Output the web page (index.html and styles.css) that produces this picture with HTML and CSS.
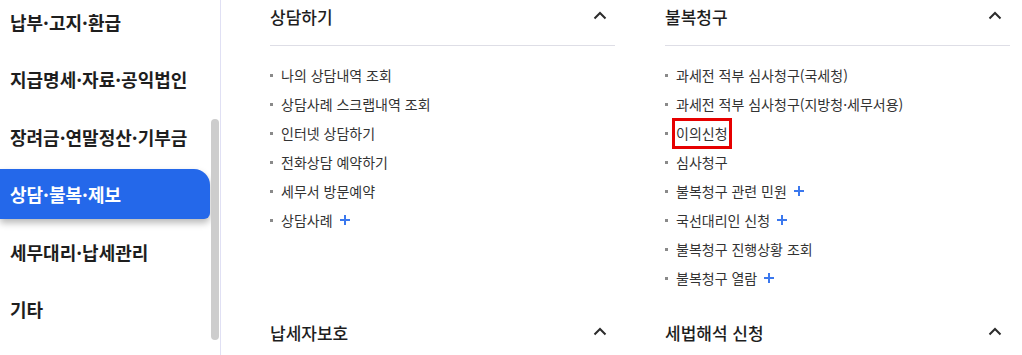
FILE: index.html
```html
<!DOCTYPE html>
<html lang="ko">
<head>
  <meta charset="UTF-8">
  <title>상담·불복·제보</title>
  <meta name="viewport" content="width=device-width, initial-scale=1.0" />
  <link rel="stylesheet" href="styles.css">
</head>
<body>
  <div class="page">
    <!-- Menu latéral -->
    <aside class="side">
      <ul class="side-menu">
        <li>납부·고지·환급</li>
        <li>지급명세·자료·공익법인</li>
        <li>장려금·연말정산·기부금</li>
        <li class="active">상담·불복·제보</li>
        <li>세무대리·납세관리</li>
        <li>기타</li>
      </ul>
      <div class="scroll-track"><div class="scroll-thumb"></div></div>
    </aside>

    <!-- Sous-menus -->
    <main class="menu-grid">
      <section class="group">
        <div class="group-head">
          <h3>상담하기</h3>
          <svg class="chevron" width="14" height="9" viewBox="0 0 14 9"><path d="M1.5 7.5 L7 2 L12.5 7.5" /></svg>
        </div>
        <ul class="links">
          <li>나의 상담내역 조회</li>
          <li>상담사례 스크랩내역 조회</li>
          <li>인터넷 상담하기</li>
          <li>전화상담 예약하기</li>
          <li>세무서 방문예약</li>
          <li>상담사례 <svg class="plus" width="10" height="10" viewBox="0 0 10 10"><path d="M5 0 V10 M0 5 H10" /></svg></li>
        </ul>
      </section>

      <section class="group">
        <div class="group-head">
          <h3>불복청구</h3>
          <svg class="chevron" width="14" height="9" viewBox="0 0 14 9"><path d="M1.5 7.5 L7 2 L12.5 7.5" /></svg>
        </div>
        <ul class="links">
          <li>과세전 적부 심사청구(국세청)</li>
          <li>과세전 적부 심사청구(지방청·세무서용)</li>
          <li><span class="mark">이의신청</span></li>
          <li>심사청구</li>
          <li>불복청구 관련 민원 <svg class="plus" width="10" height="10" viewBox="0 0 10 10"><path d="M5 0 V10 M0 5 H10" /></svg></li>
          <li>국선대리인 신청 <svg class="plus" width="10" height="10" viewBox="0 0 10 10"><path d="M5 0 V10 M0 5 H10" /></svg></li>
          <li>불복청구 진행상황 조회</li>
          <li>불복청구 열람 <svg class="plus" width="10" height="10" viewBox="0 0 10 10"><path d="M5 0 V10 M0 5 H10" /></svg></li>
        </ul>
      </section>

      <section class="group">
        <div class="group-head">
          <h3>납세자보호</h3>
          <svg class="chevron" width="14" height="9" viewBox="0 0 14 9"><path d="M1.5 7.5 L7 2 L12.5 7.5" /></svg>
        </div>
      </section>

      <section class="group">
        <div class="group-head">
          <h3>세법해석 신청</h3>
          <svg class="chevron" width="14" height="9" viewBox="0 0 14 9"><path d="M1.5 7.5 L7 2 L12.5 7.5" /></svg>
        </div>
      </section>
    </main>
  </div>
</body>
</html>
```

FILE: styles.css
```css
/* ------------------------------
   Variables
   ------------------------------ */
:root {
  --blue: #2468ea;
  --plus-blue: #3b78ee;
  --text-strong: #1e1e1e;
  --text: #333333;
  --line: #dedee6;
  --side-line: #e0e0f4;
}

* {
  margin: 0;
  padding: 0;
  box-sizing: border-box;
}

body {
  background: #ffffff;
  color: var(--text);
  font-family: "Noto Sans CJK KR", "Noto Sans", sans-serif;
  overflow: hidden;
}

ul {
  list-style: none;
}

.page {
  display: flex;
  height: 355px;
}

/* ------------------------------
   Menu latéral
   ------------------------------ */
.side {
  flex: 0 0 221px;
  display: flex;
  border-right: 1px solid var(--side-line);
}

.side-menu {
  width: 210px;
  margin-top: -3px;
  display: flex;
  flex-direction: column;
  gap: 7.4px;
}

.side-menu li {
  height: 50px;
  line-height: 50px;
  padding-left: 10px;
  font-size: 18px;
  font-weight: 700;
  color: var(--text-strong);
  white-space: nowrap;
}

.side-menu li.active {
  background: var(--blue);
  color: #fff;
  border-radius: 0 16px 6px 0;
  box-shadow: 0 4px 7px rgba(0, 0, 0, 0.28);
}

.scroll-track {
  width: 8px;
  margin-left: 1px;
}

.scroll-thumb {
  margin-top: 119px;
  height: 221px;
  background: #cdcdcd;
  border-radius: 4px;
}

/* ------------------------------
   Sous-menus
   ------------------------------ */
.menu-grid {
  padding-left: 49px;
  display: grid;
  grid-template-columns: 345px 345px;
  column-gap: 50px;
  row-gap: 23.5px;
  align-content: start;
}

.group-head {
  display: flex;
  justify-content: space-between;
  align-items: center;
  height: 46px;
  padding-bottom: 11px;
  border-bottom: 1px solid var(--line);
}

.group-head h3 {
  font-size: 17px;
  font-weight: 500;
  line-height: 34px;
  color: var(--text-strong);
}

.chevron {
  margin-right: 8px;
  margin-top: -4px;
}
.chevron path {
  fill: none;
  stroke: #2c2c2c;
  stroke-width: 2;
}

.links {
  padding-top: 14.5px;
}

.links li {
  display: flex;
  align-items: center;
  height: 29px;
  font-size: 14px;
  color: var(--text);
  white-space: nowrap;
}
.links li::before {
  content: "";
  width: 3px;
  height: 3px;
  background: #8a8a8a;
  margin-right: 8px;
  flex: none;
}

.plus {
  margin-left: 7px;
}
.plus path {
  stroke: var(--plus-blue);
  stroke-width: 2;
}

/* Encadré rouge */
.mark {
  display: inline-block;
  border: 3px solid #e60000;
  padding: 0 1px;
  margin: -3px -4px;
  line-height: 25px;
}
```
